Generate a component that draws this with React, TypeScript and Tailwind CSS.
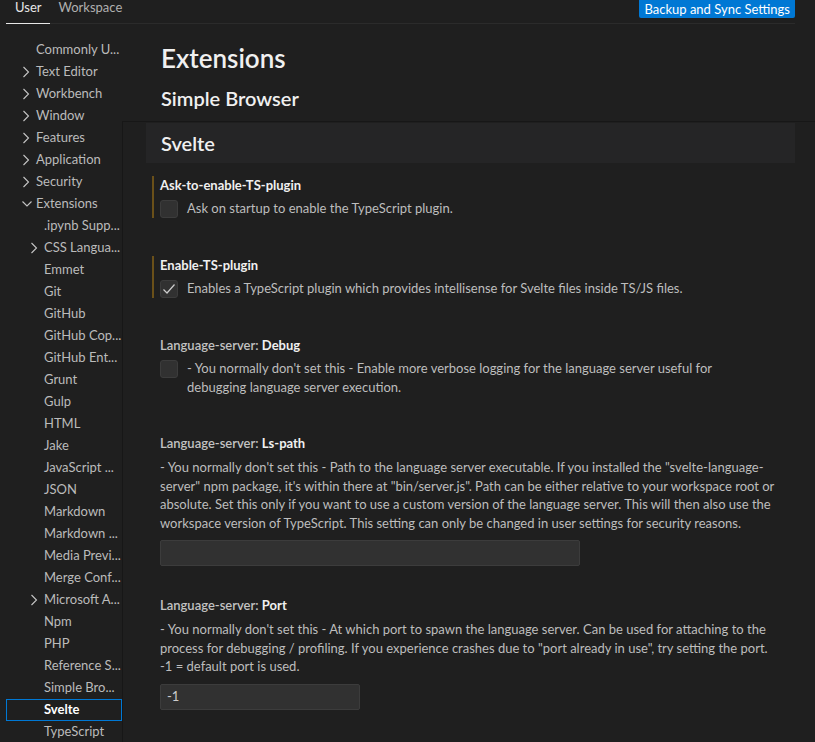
import React from 'react';

type NavItem = {
  label: string;
  level: 0 | 1;
  chevron?: 'right' | 'down';
  selected?: boolean;
};

const NAV: NavItem[] = [
  { label: 'Commonly U...', level: 0 },
  { label: 'Text Editor', level: 0, chevron: 'right' },
  { label: 'Workbench', level: 0, chevron: 'right' },
  { label: 'Window', level: 0, chevron: 'right' },
  { label: 'Features', level: 0, chevron: 'right' },
  { label: 'Application', level: 0, chevron: 'right' },
  { label: 'Security', level: 0, chevron: 'right' },
  { label: 'Extensions', level: 0, chevron: 'down' },
  { label: '.ipynb Supp...', level: 1 },
  { label: 'CSS Langua...', level: 1, chevron: 'right' },
  { label: 'Emmet', level: 1 },
  { label: 'Git', level: 1 },
  { label: 'GitHub', level: 1 },
  { label: 'GitHub Cop...', level: 1 },
  { label: 'GitHub Ent...', level: 1 },
  { label: 'Grunt', level: 1 },
  { label: 'Gulp', level: 1 },
  { label: 'HTML', level: 1 },
  { label: 'Jake', level: 1 },
  { label: 'JavaScript ...', level: 1 },
  { label: 'JSON', level: 1 },
  { label: 'Markdown', level: 1 },
  { label: 'Markdown ...', level: 1 },
  { label: 'Media Previ...', level: 1 },
  { label: 'Merge Conf...', level: 1 },
  { label: 'Microsoft A...', level: 1, chevron: 'right' },
  { label: 'Npm', level: 1 },
  { label: 'PHP', level: 1 },
  { label: 'Reference S...', level: 1 },
  { label: 'Simple Bro...', level: 1 },
  { label: 'Svelte', level: 1, selected: true },
  { label: 'TypeScript', level: 1 },
];

const Chevron = ({ dir }: { dir: 'right' | 'down' }) => (
  <svg width="14" height="14" viewBox="0 0 14 14" fill="none" className="shrink-0">
    {dir === 'right' ? (
      <path d="M1.5 2 L6.5 7 L1.5 12" stroke="#c5c5c5" strokeWidth="1.1" />
    ) : (
      <path d="M0.5 4.5 L5 9 L9.5 4.5" stroke="#c5c5c5" strokeWidth="1.1" />
    )}
  </svg>
);

const Check = () => (
  <svg width="16" height="16" viewBox="0 0 16 16" fill="none">
    <path d="M2.5 8.5 L6 12 L13.5 3.5" stroke="#cccccc" strokeWidth="1.2" />
  </svg>
);

const Checkbox = ({ checked }: { checked?: boolean }) => (
  <div className="mt-px flex h-[18px] w-[18px] shrink-0 items-center justify-center rounded-[3px] border border-[#3c3c3c] bg-[#313131]">
    {checked && <Check />}
  </div>
);

const Title = ({ category, label }: { category?: string; label: string }) => (
  <div className="h-[18px] text-[13px] leading-[18px]">
    {category && <span className="font-semibold text-[#c2c2c2]">{category}</span>}
    <span className="font-bold text-[#f0f0f0]">{label}</span>
  </div>
);

const BoolSetting = ({
  category,
  label,
  lines,
  checked,
  modified,
  className,
}: {
  category?: string;
  label: string;
  lines: string[];
  checked?: boolean;
  modified?: boolean;
  className?: string;
}) => (
  <div
    className={`ml-[29px] border-l-2 pl-[6px] ${modified ? 'border-[#6a5019]' : 'border-transparent'} ${className ?? ''}`}
  >
    <Title category={category} label={label} />
    <div className="mt-[5px] flex items-start gap-[9px]">
      <Checkbox checked={checked} />
      <p className="text-[13px] leading-[18.5px] text-[#bdbdbd]">
        {lines.map((l, i) => (
          <span key={i} className="block">
            {l}
          </span>
        ))}
      </p>
    </div>
  </div>
);

const TextSetting = ({
  category,
  label,
  lines,
  value,
  inputClass,
  className,
}: {
  category?: string;
  label: string;
  lines: string[];
  value?: string;
  inputClass: string;
  className?: string;
}) => (
  <div className={`ml-[29px] border-l-2 border-transparent pl-[6px] ${className ?? ''}`}>
    <Title category={category} label={label} />
    <p className="mt-[6px] text-[13px] leading-[18.5px] text-[#bdbdbd]">
      {lines.map((l, i) => (
        <span key={i} className="block whitespace-nowrap">
          {l}
        </span>
      ))}
    </p>
    <div
      className={`mt-[8px] flex h-[26px] items-center rounded-[2px] border border-[#3c3c3c] bg-[#313131] px-[6px] text-[13px] text-[#cccccc] ${inputClass}`}
    >
      {value}
    </div>
  </div>
);

export default function App() {
  return (
    <div className="flex h-[742px] w-[815px] flex-col overflow-hidden bg-[#1f1f1f] font-['Lato','Noto_Sans',sans-serif] text-[13px] text-[#cccccc]">
      {/* tab bar */}
      <div className="ml-[6px] mr-[20px] flex h-[24px] shrink-0 items-start justify-between border-b border-[#2b2b2b]">
        <div className="flex h-[24px]">
          <div className="h-[24px] border-b border-[#e7e7e7] px-[9px] leading-[15px] text-[#e7e7e7]">User</div>
          <div className="h-[24px] px-[8px] leading-[15px] text-[#b0b0b0]">Workspace</div>
        </div>
        <button className="h-[18px] rounded-b-[2px] bg-[#0078d4] px-[5px] text-[13px] leading-[15px] text-white">
          Backup and Sync Settings
        </button>
      </div>

      <div className="flex min-h-0 flex-1">
        {/* table of contents */}
        <nav className="w-[122px] shrink-0 pt-[15px]">
          {NAV.map((item) => (
            <div
              key={item.label}
              className={`ml-[6px] flex h-[22px] items-center border ${
                item.selected ? 'border-[#0078d4] font-bold text-white' : 'border-transparent text-[#bbbbbb]'
              } ${item.level === 0 ? (item.chevron ? 'pl-[15px]' : 'pl-[29px]') : item.chevron ? 'pl-[23px]' : 'pl-[37px]'}`}
            >
              {item.chevron && <Chevron dir={item.chevron} />}
              <span className="whitespace-nowrap">{item.label}</span>
            </div>
          ))}
        </nav>

        {/* settings */}
        <div className="flex min-w-0 flex-1 flex-col">
          <div className="shrink-0 pl-[39px]">
            <h1 className="mt-[18px] text-[26px] font-semibold leading-[32px] text-[#f0f0f0]">Extensions</h1>
            <h2 className="mt-[11px] text-[20px] font-semibold leading-[26px] text-[#f0f0f0]">Simple Browser</h2>
          </div>
          <div className="mt-[10px] flex-1 border-l border-t border-[#171717]">
            <div className="ml-[23px] mr-[20px] mt-px flex h-[40px] items-center bg-[#252526] pl-[15px] text-[20px] font-semibold text-[#f0f0f0]">
              Svelte
            </div>

            <BoolSetting
              className="mt-[13px]"
              label="Ask-to-enable-TS-plugin"
              lines={['Ask on startup to enable the TypeScript plugin.']}
              modified
            />
            <BoolSetting
              className="mt-[38px]"
              label="Enable-TS-plugin"
              lines={['Enables a TypeScript plugin which provides intellisense for Svelte files inside TS/JS files.']}
              checked
              modified
            />
            <BoolSetting
              className="mt-[38px]"
              category="Language-server: "
              label="Debug"
              lines={[
                "- You normally don't set this - Enable more verbose logging for the language server useful for",
                'debugging language server execution.',
              ]}
            />
            <TextSetting
              className="mt-[38px]"
              category="Language-server: "
              label="Ls-path"
              inputClass="w-[420px]"
              lines={[
                '- You normally don\'t set this - Path to the language server executable. If you installed the "svelte-language-',
                'server" npm package, it\'s within there at "bin/server.js". Path can be either relative to your workspace root or',
                'absolute. Set this only if you want to use a custom version of the language server. This will then also use the',
                'workspace version of TypeScript. This setting can only be changed in user settings for security reasons.',
              ]}
            />
            <TextSetting
              className="mt-[30px]"
              category="Language-server: "
              label="Port"
              value="-1"
              inputClass="w-[200px]"
              lines={[
                "- You normally don't set this - At which port to spawn the language server. Can be used for attaching to the",
                'process for debugging / profiling. If you experience crashes due to "port already in use", try setting the port.',
                '-1 = default port is used.',
              ]}
            />
          </div>
        </div>
      </div>
    </div>
  );
}
